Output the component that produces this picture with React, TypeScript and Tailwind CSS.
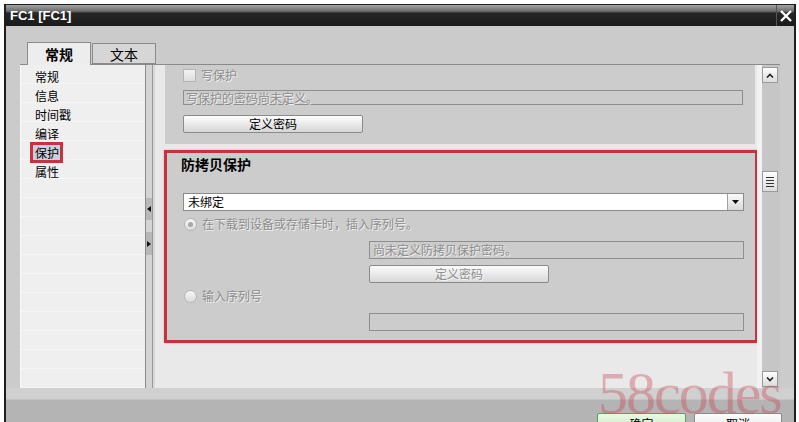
export default function App() {
  const navItems = ["常规", "信息", "时间戳", "编译", "保护", "属性"];

  return (
    <div className="relative w-[799px] h-[422px] overflow-hidden bg-white font-['Noto_Sans_CJK_SC','Liberation_Sans',sans-serif] text-[12px] leading-[16px] text-black">
      <div className="ml-[4px] mt-[4px] w-[792px] h-[418px] overflow-hidden flex flex-col border-l-2 border-r-2 border-t border-[#1e1e1e] bg-[#cbcbcb]">
        {/* title bar */}
        <div className="h-[21px] shrink-0 flex items-center justify-between bg-[linear-gradient(to_bottom,#a4a4a4_0%,#6a6a6a_30%,#262626_38%,#1b1b1b_100%)]">
          <span className="pl-[4px] font-['Liberation_Sans',sans-serif] font-bold text-[13px] text-white">FC1 [FC1]</span>
          <div className="w-[18px] h-[21px] flex items-center justify-center border-l border-[#555]">
            <svg width="14" height="14" viewBox="0 0 14 14">
              <path d="M2 2 L12 12 M12 2 L2 12" stroke="#fff" strokeWidth="2.4" />
            </svg>
          </div>
        </div>

        {/* tabs */}
        <div className="flex shrink-0 pl-[21px] pt-[16px] h-[39px] relative z-10 -mb-px">
          <div className="w-[64px] h-[23px] flex items-center justify-center border border-b-0 border-[#8a8a8a] bg-[#ededed] text-[14px] font-bold">常规</div>
          <div className="ml-px mt-[1px] w-[64px] h-[21px] flex items-center justify-center border border-[#8a8a8a] bg-[#d6d6d6] text-[14px]">文本</div>
        </div>

        {/* main area */}
        <div className="flex shrink-0">
          <div className="ml-[14px] w-[760px] h-[324px] flex border-t border-[#8a8a8a]">
            {/* nav */}
            <div className="w-[126px] border-l border-[#fafafa] border-r border-r-[#8a8a8a] bg-[repeating-linear-gradient(to_bottom,#efefef_0px,#efefef_18px,#f5f5f5_18px,#f5f5f5_19px)] pt-[2px] pl-[14px]">
              {navItems.map((item) =>
                item === "保护" ? (
                  <div key={item} className="-ml-[5px] w-[33px] h-[21px] -my-[1px] border-[3px] border-[#c8323c] bg-[#c9cfdc] flex items-center pl-[2px]">
                    {item}
                  </div>
                ) : (
                  <div key={item} className="h-[19px] flex items-center">{item}</div>
                )
              )}
            </div>

            {/* splitter */}
            <div className="w-[7px] bg-[#d4d4d4] border-r border-[#9a9a9a] flex flex-col items-center pt-[133px]">
              <div className="w-[6px] h-[22px] bg-[#b8b8b8] flex items-center justify-center">
                <svg width="4" height="6" viewBox="0 0 4 6"><path d="M4 0 L0 3 L4 6 Z" fill="#111" /></svg>
              </div>
              <div className="mt-[12px] w-[6px] h-[23px] bg-[#b8b8b8] flex items-center justify-center">
                <svg width="4" height="6" viewBox="0 0 4 6"><path d="M0 0 L4 3 L0 6 Z" fill="#111" /></svg>
              </div>
            </div>
            <div className="w-[2px] bg-[#d8d8d8]" />

            {/* content */}
            <div className="w-[602px] bg-[#e9e9e9] pl-[10px] flex flex-col">
              {/* write protection card */}
              <div className="w-[590px] bg-[#cccccc] pl-[18px] pt-[2px] pb-[11px]">
                <div className="h-[16px] flex items-center gap-[5px]">
                  <div className="w-[13px] h-[13px] border border-[#b4b4b4] bg-[linear-gradient(to_bottom,#f2f2f2,#dcdcdc)]" />
                  <span className="text-[#8e8e8e] [text-shadow:1px_1px_0_#efefef]">写保护</span>
                </div>
                <div className="mt-[7px] w-[560px] h-[15px] border border-[#8e8e8e] flex items-center pl-[2px] text-[#8e8e8e] [text-shadow:1px_1px_0_#efefef]">
                  写保护的密码尚未定义。
                </div>
                <div className="mt-[10px] w-[180px] h-[18px] border border-[#8a8a8a] rounded-[2px] bg-[linear-gradient(to_bottom,#fdfdfd,#e6e6e6_60%,#d6d6d6)] flex items-center justify-center">
                  定义密码
                </div>
              </div>

              {/* copy protection (highlighted) */}
              <div className="mt-[6px] -ml-[1px] w-[594px] border-[3px] border-[#c3343f] shadow-[0_0_2px_#f0a0a8] bg-[#cccccc] pr-[11px] pt-[3px] pb-[9px]">
                <div className="pl-[14px] h-[16px] flex items-center text-[14px] font-bold">防拷贝保护</div>
                <div className="ml-[16px] mt-[21px] h-[18px] flex border border-[#8a8a8a] bg-white">
                  <span className="flex-1 pl-[4px] flex items-center">未绑定</span>
                  <div className="w-[16px] border-l border-[#a0a0a0] bg-[linear-gradient(to_bottom,#fafafa,#dadada)] flex items-center justify-center">
                    <svg width="7" height="4" viewBox="0 0 7 4"><path d="M0 0 L7 0 L3.5 4 Z" fill="#111" /></svg>
                  </div>
                </div>
                <div className="ml-[17px] mt-[5px] h-[16px] flex items-center gap-[5px]">
                  <div className="w-[13px] h-[13px] rounded-full border border-[#b4b4b4] bg-[linear-gradient(to_bottom,#f6f6f6,#dcdcdc)] flex items-center justify-center">
                    <div className="w-[5px] h-[5px] rounded-full bg-[#a8a8a8]" />
                  </div>
                  <span className="text-[#8e8e8e] [text-shadow:1px_1px_0_#efefef]">在下载到设备或存储卡时，插入序列号。</span>
                </div>
                <div className="ml-[202px] mt-[9px] h-[18px] border border-[#8e8e8e] flex items-center pl-[3px] text-[#8e8e8e] [text-shadow:1px_1px_0_#efefef]">
                  尚未定义防拷贝保护密码。
                </div>
                <div className="ml-[202px] mt-[6px] w-[180px] h-[18px] border border-[#8a8a8a] rounded-[2px] bg-[linear-gradient(to_bottom,#fbfbfb,#e6e6e6_60%,#d8d8d8)] flex items-center justify-center text-[#8e8e8e] [text-shadow:1px_1px_0_#f4f4f4]">
                  定义密码
                </div>
                <div className="ml-[17px] mt-[5px] h-[16px] flex items-center gap-[5px]">
                  <div className="w-[13px] h-[13px] rounded-full border border-[#b4b4b4] bg-[linear-gradient(to_bottom,#f6f6f6,#dcdcdc)]" />
                  <span className="text-[#8e8e8e] [text-shadow:1px_1px_0_#efefef]">输入序列号</span>
                </div>
                <div className="ml-[202px] mt-[9px] h-[18px] border border-[#8e8e8e]" />
              </div>
            </div>

            {/* scrollbar */}
            <div className="w-[23px] bg-[#c6c6c6] flex">
              <div className="w-[5px] bg-[#f2f2f2]" />
              <div className="w-[16px] flex flex-col pt-[2px] pb-[1px]">
                <div className="h-[16px] border border-[#9a9a9a] bg-[linear-gradient(to_bottom,#fdfdfd,#dcdcdc)] flex items-center justify-center">
                  <svg width="8" height="5" viewBox="0 0 8 5"><path d="M1 4.5 L4 1.5 L7 4.5" stroke="#222" strokeWidth="1.6" fill="none" /></svg>
                </div>
                <div className="mt-[88px] h-[21px] border border-[#9a9a9a] bg-[linear-gradient(to_bottom,#fdfdfd,#dcdcdc)] flex flex-col items-center justify-center gap-[2px]">
                  <div className="w-[8px] h-px bg-[#333]" />
                  <div className="w-[8px] h-px bg-[#333]" />
                  <div className="w-[8px] h-px bg-[#333]" />
                  <div className="w-[8px] h-px bg-[#333]" />
                </div>
                <div className="flex-1" />
                <div className="h-[16px] border border-[#9a9a9a] bg-[linear-gradient(to_bottom,#fdfdfd,#dcdcdc)] flex items-center justify-center">
                  <svg width="8" height="5" viewBox="0 0 8 5"><path d="M1 0.5 L4 3.5 L7 0.5" stroke="#222" strokeWidth="1.6" fill="none" /></svg>
                </div>
              </div>
            </div>
          </div>
        </div>

        {/* footer */}
        <div className="h-[11px] shrink-0 bg-[#d0d0d0]" />
        <div className="h-[40px] shrink-0 bg-[#b4b4b4] border-t border-[#c4c4c4] flex items-start justify-end gap-[8px] pr-[12px] pt-[13px]">
          <div className="w-[89px] h-[22px] shrink-0 border border-[#5e9e5e] rounded-[2px] bg-[linear-gradient(to_bottom,#eaf8e4,#c8e8bc)] flex items-center justify-center">确定</div>
          <div className="w-[88px] h-[22px] shrink-0 border border-[#8a8a8a] rounded-[2px] bg-[linear-gradient(to_bottom,#fdfdfd,#e2e2e2)] flex items-center justify-center">取消</div>
        </div>
      </div>

      {/* watermark */}
      <div className="absolute left-[598px] top-[363px] font-['Liberation_Serif',serif] text-[60px] leading-[60px] tracking-[-2px] text-[rgba(200,60,80,0.35)] pointer-events-none">
        58codes
      </div>
    </div>
  );
}
